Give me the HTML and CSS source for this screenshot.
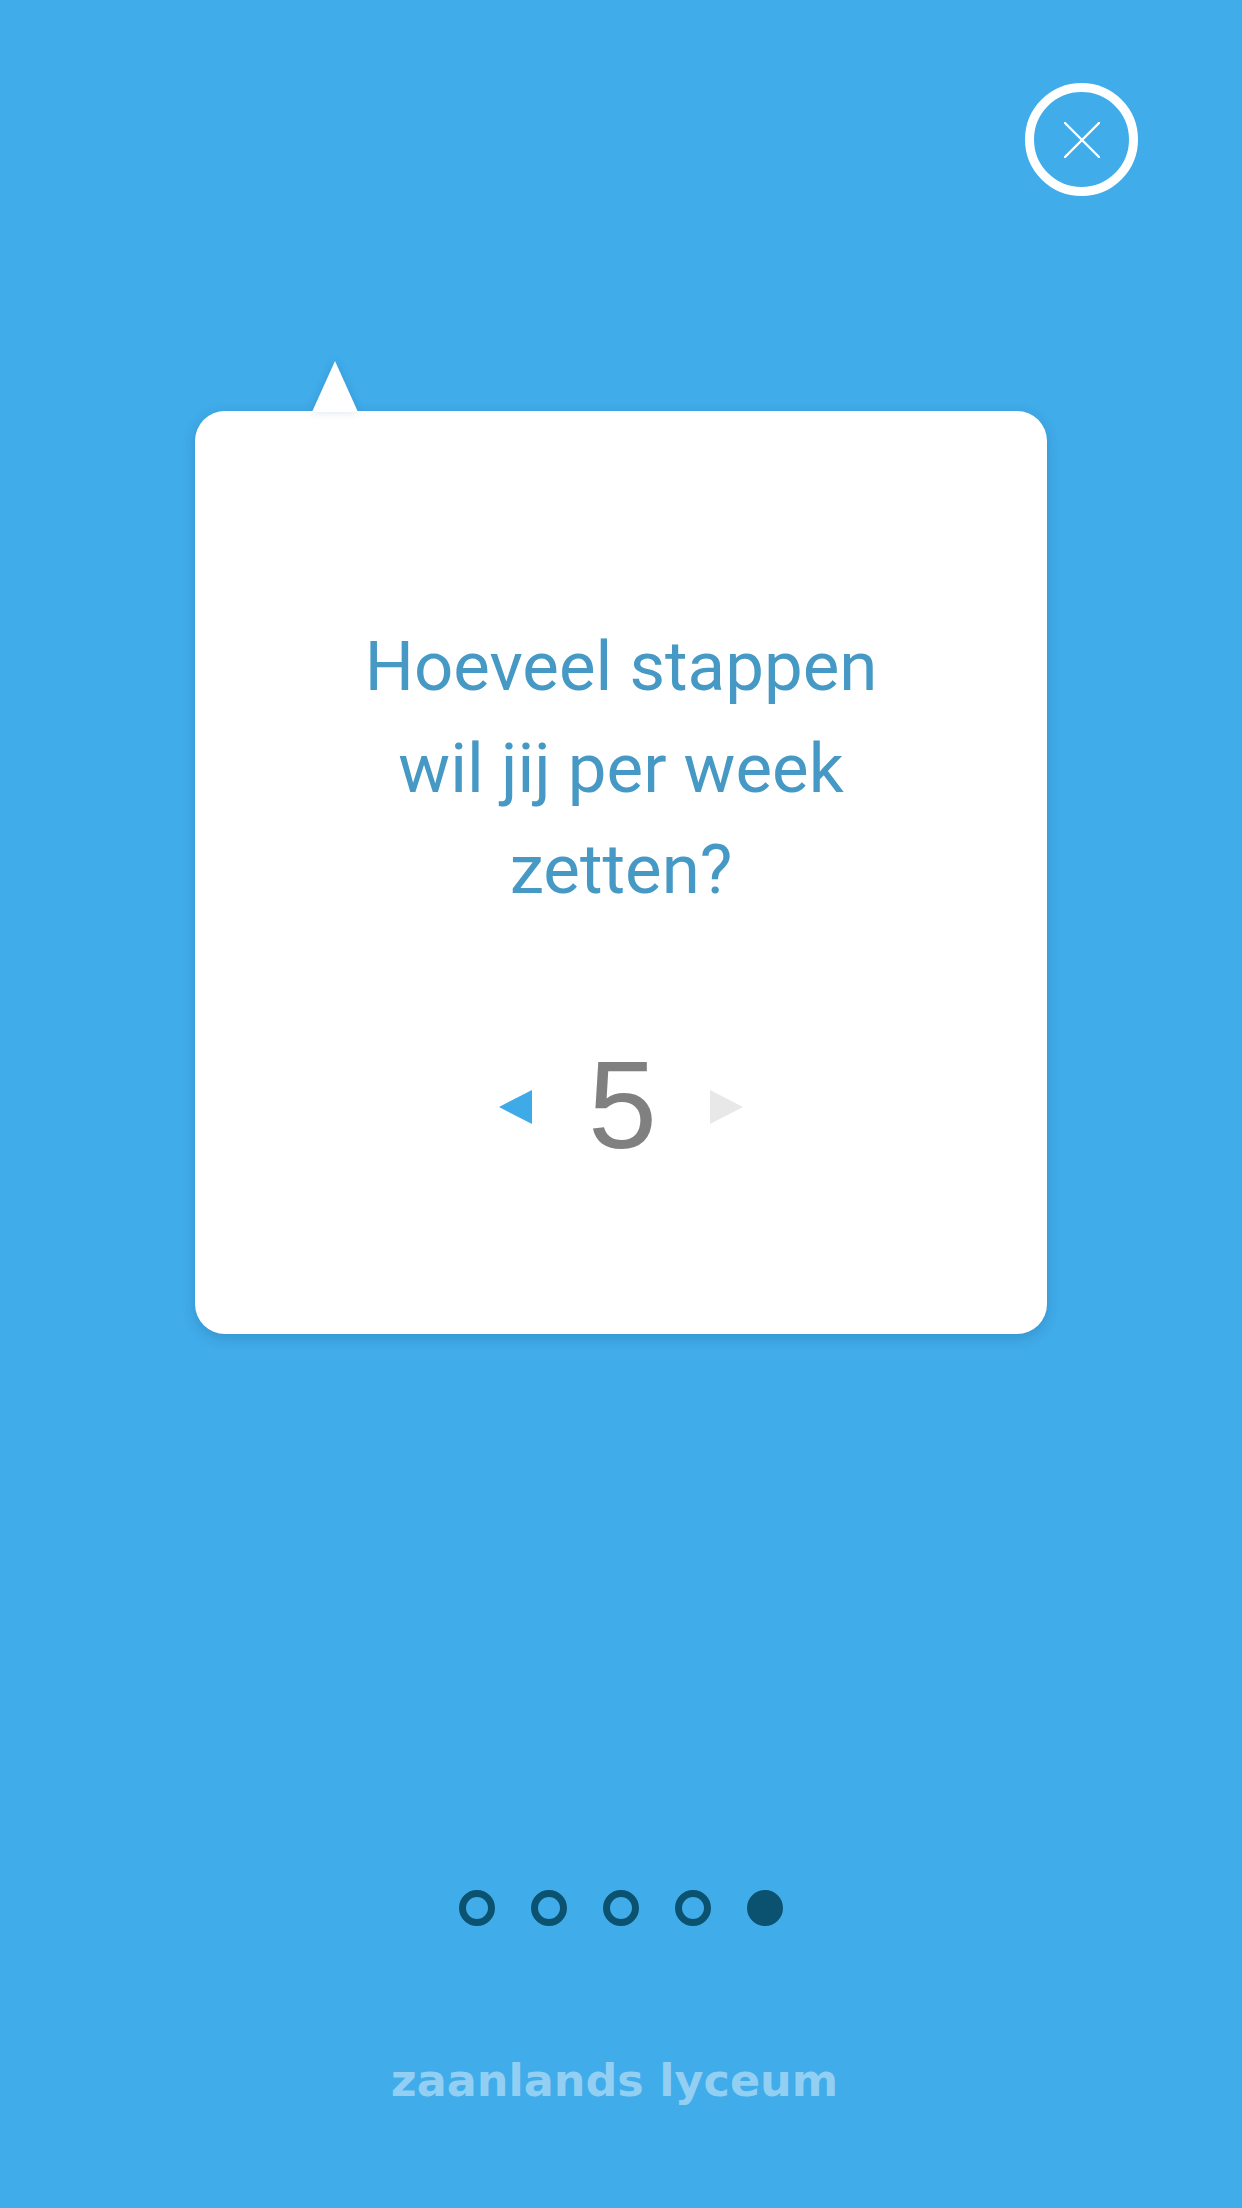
FILE: index.html
```html
<!DOCTYPE html>
<html lang="nl">
<head>
<meta charset="utf-8">
<title>Stappen</title>
<link rel="stylesheet" href="styles.css">
</head>
<body>
<div class="screen">
  <div class="top-bar">
    <button class="close-btn" aria-label="Sluiten">
      <svg width="36" height="36" viewBox="0 0 36 36"><path d="M1 1 L35 35 M35 1 L1 35" stroke="#fff" stroke-width="2.4" stroke-linecap="round" fill="none"/></svg>
    </button>
  </div>
  <div class="card">
    <p class="question">Hoeveel stappen<br>wil jij per week<br>zetten?</p>
    <div class="picker">
      <span class="arrow arrow-left"></span>
      <span class="value">5</span>
      <span class="arrow arrow-right"></span>
    </div>
  </div>
  <div class="dots">
    <span class="dot"></span>
    <span class="dot"></span>
    <span class="dot"></span>
    <span class="dot"></span>
    <span class="dot active"></span>
  </div>
  <div class="footer">zaanlands lyceum</div>
</div>
</body>
</html>
```
FILE: styles.css
```css
html, body {
  margin: 0;
  padding: 0;
}
body {
  background: #40acea;
  width: 1242px;
  height: 2208px;
  overflow: hidden;
}
.screen {
  display: flex;
  flex-direction: column;
  align-items: center;
  height: 2208px;
}
.top-bar {
  align-self: stretch;
  display: flex;
  justify-content: flex-end;
  padding: 83px 104px 0 0;
}
.close-btn {
  width: 113px;
  height: 113px;
  box-sizing: border-box;
  border: 9px solid #fff;
  border-radius: 50%;
  background: transparent;
  display: flex;
  align-items: center;
  justify-content: center;
  padding: 0;
  margin: 0;
}
.card {
  position: relative;
  margin-top: 215px;
  width: 852px;
  height: 923px;
  box-sizing: border-box;
  background: #fff;
  border-radius: 30px;
  box-shadow: 0 4px 14px rgba(0, 40, 80, 0.18);
  padding-top: 205px;
  display: flex;
  flex-direction: column;
  align-items: center;
}
.card::before {
  content: "";
  position: absolute;
  left: 117px;
  top: -50px;
  width: 0;
  height: 0;
  border-left: 23px solid transparent;
  border-right: 23px solid transparent;
  border-bottom: 51px solid #fff;
  filter: drop-shadow(0 0 4px rgba(0, 40, 80, 0.15));
}
.question {
  margin: 0;
  font-family: Roboto, "Noto Sans", sans-serif;
  font-size: 69px;
  line-height: 101.5px;
  color: #4599c4;
  text-align: center;
}
.picker {
  margin-top: 122px;
  display: flex;
  align-items: center;
}
.value {
  font-family: "Liberation Sans", Arial, sans-serif;
  font-size: 124px;
  line-height: 124px;
  color: #808080;
  margin: 0 53px 0 56px;
}
.arrow {
  width: 0;
  height: 0;
  border-top: 17px solid transparent;
  border-bottom: 17px solid transparent;
  margin-top: 4px;
}
.arrow-left {
  border-right: 33px solid #3eaae8;
}
.arrow-right {
  border-left: 33px solid #e8e8e8;
}
.dots {
  margin-top: 556px;
  display: flex;
  gap: 36px;
}
.dot {
  width: 36px;
  height: 36px;
  box-sizing: border-box;
  border: 7px solid #0a5270;
  border-radius: 50%;
}
.dot.active {
  background: #0a5270;
}
.footer {
  margin-top: 129px;
  padding-right: 13px;
  font-family: "DejaVu Sans", Verdana, sans-serif;
  font-weight: bold;
  font-size: 44.5px;
  color: #92cff3;
}
```
